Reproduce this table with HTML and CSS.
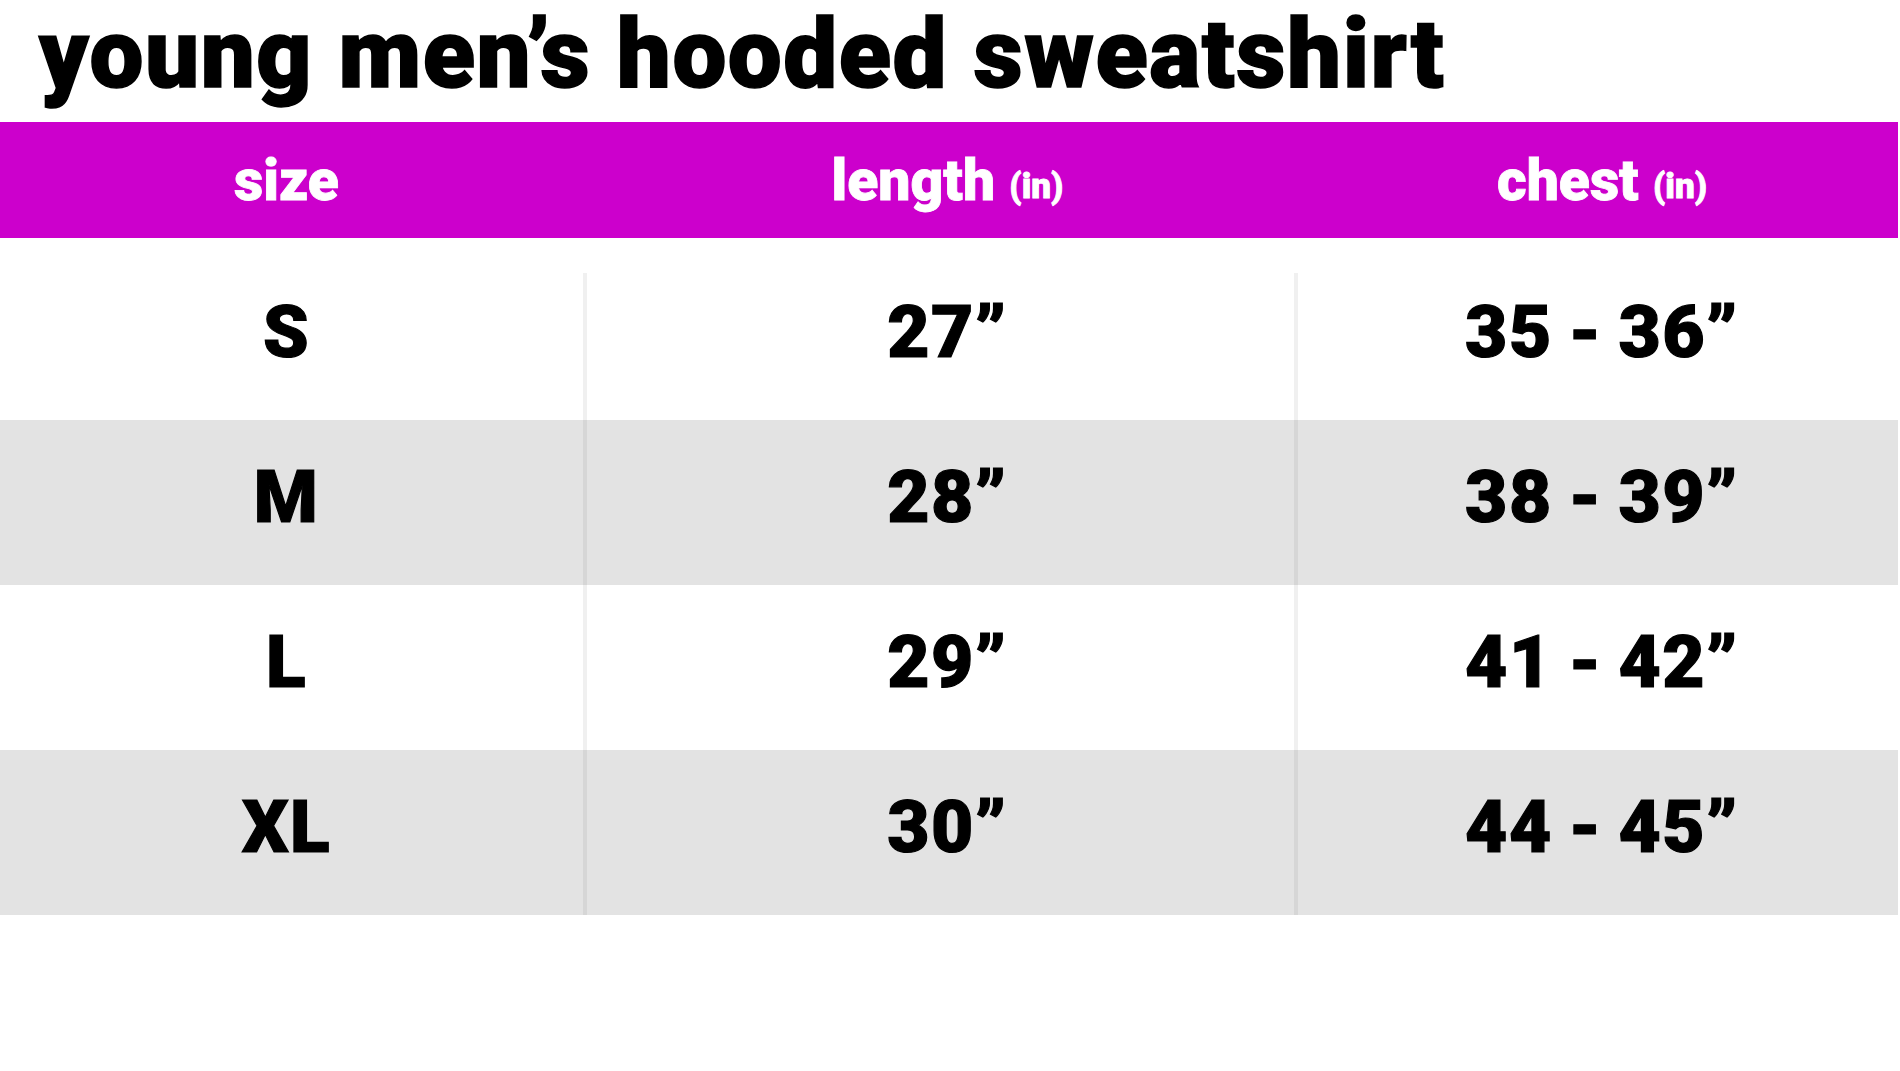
FILE: index.html
```html
<!DOCTYPE html>
<html lang="en">
<head>
<meta charset="utf-8">
<title>young men’s hooded sweatshirt</title>
<link rel="stylesheet" href="styles.css">
</head>
<body>
<h1 class="title">young men’s hooded sweatshirt</h1>
<div class="chart">
  <div class="head">
    <div class="hcell c1"><span>size</span></div>
    <div class="hcell c2"><span>length <span class="unit">(in)</span></span></div>
    <div class="hcell c3"><span>chest <span class="unit">(in)</span></span></div>
  </div>
  <div class="spacer"></div>
  <div class="row first">
    <div class="cell c1">S</div>
    <div class="cell c2 sep">27”</div>
    <div class="cell c3 sep">35 - 36”</div>
  </div>
  <div class="row alt">
    <div class="cell c1">M</div>
    <div class="cell c2 sep">28”</div>
    <div class="cell c3 sep">38 - 39”</div>
  </div>
  <div class="row">
    <div class="cell c1">L</div>
    <div class="cell c2 sep">29”</div>
    <div class="cell c3 sep">41 - 42”</div>
  </div>
  <div class="row alt">
    <div class="cell c1">XL</div>
    <div class="cell c2 sep">30”</div>
    <div class="cell c3 sep">44 - 45”</div>
  </div>
</div>
</body>
</html>
```

FILE: styles.css
```css
html, body {
  margin: 0;
  padding: 0;
  background: #ffffff;
}

body {
  font-family: Roboto, "Liberation Sans", Arial, sans-serif;
  color: #000000;
  width: 1900px;
}

.title {
  margin: 0;
  padding: 6px 0 20px 39px;
  font-size: 96px;
  line-height: 96px;
  font-weight: 900;
  letter-spacing: 1.5px;
  white-space: nowrap;
  -webkit-text-stroke: 1.5px #000000;
}

.chart {
  width: 1898px;
}

.head,
.row {
  display: grid;
  grid-template-columns: 583px 711px 604px;
}

.head {
  background: #cc00cc;
  height: 116px;
  color: #ffffff;
}

.hcell {
  display: flex;
  align-items: center;
  justify-content: center;
  box-sizing: border-box;
  font-size: 57px;
  font-weight: 900;
  line-height: 1;
  white-space: nowrap;
  -webkit-text-stroke: 0.8px #ffffff;
}

.unit {
  font-size: 35px;
  vertical-align: 2px;
}

.c1 {
  padding-right: 10px;
}

.c2 {
  padding-left: 18px;
}

.c3 {
  padding-left: 12px;
}

.spacer {
  height: 17px;
}

.row {
  height: 165px;
}

.row.alt {
  background: #e3e3e3;
}

.cell {
  display: flex;
  align-items: center;
  justify-content: center;
  padding-bottom: 10px;
  box-sizing: border-box;
  font-size: 73px;
  font-weight: 900;
  line-height: 1;
  letter-spacing: 1.5px;
  word-spacing: -4px;
  white-space: nowrap;
  -webkit-text-stroke: 1.2px #000000;
}

.sep {
  background-image: linear-gradient(rgba(0, 0, 0, 0.06), rgba(0, 0, 0, 0.06));
  background-size: 4px 100%;
  background-repeat: no-repeat;
  background-position: 0 0;
}

.first .sep {
  background-position: 0 18px;
}
```
